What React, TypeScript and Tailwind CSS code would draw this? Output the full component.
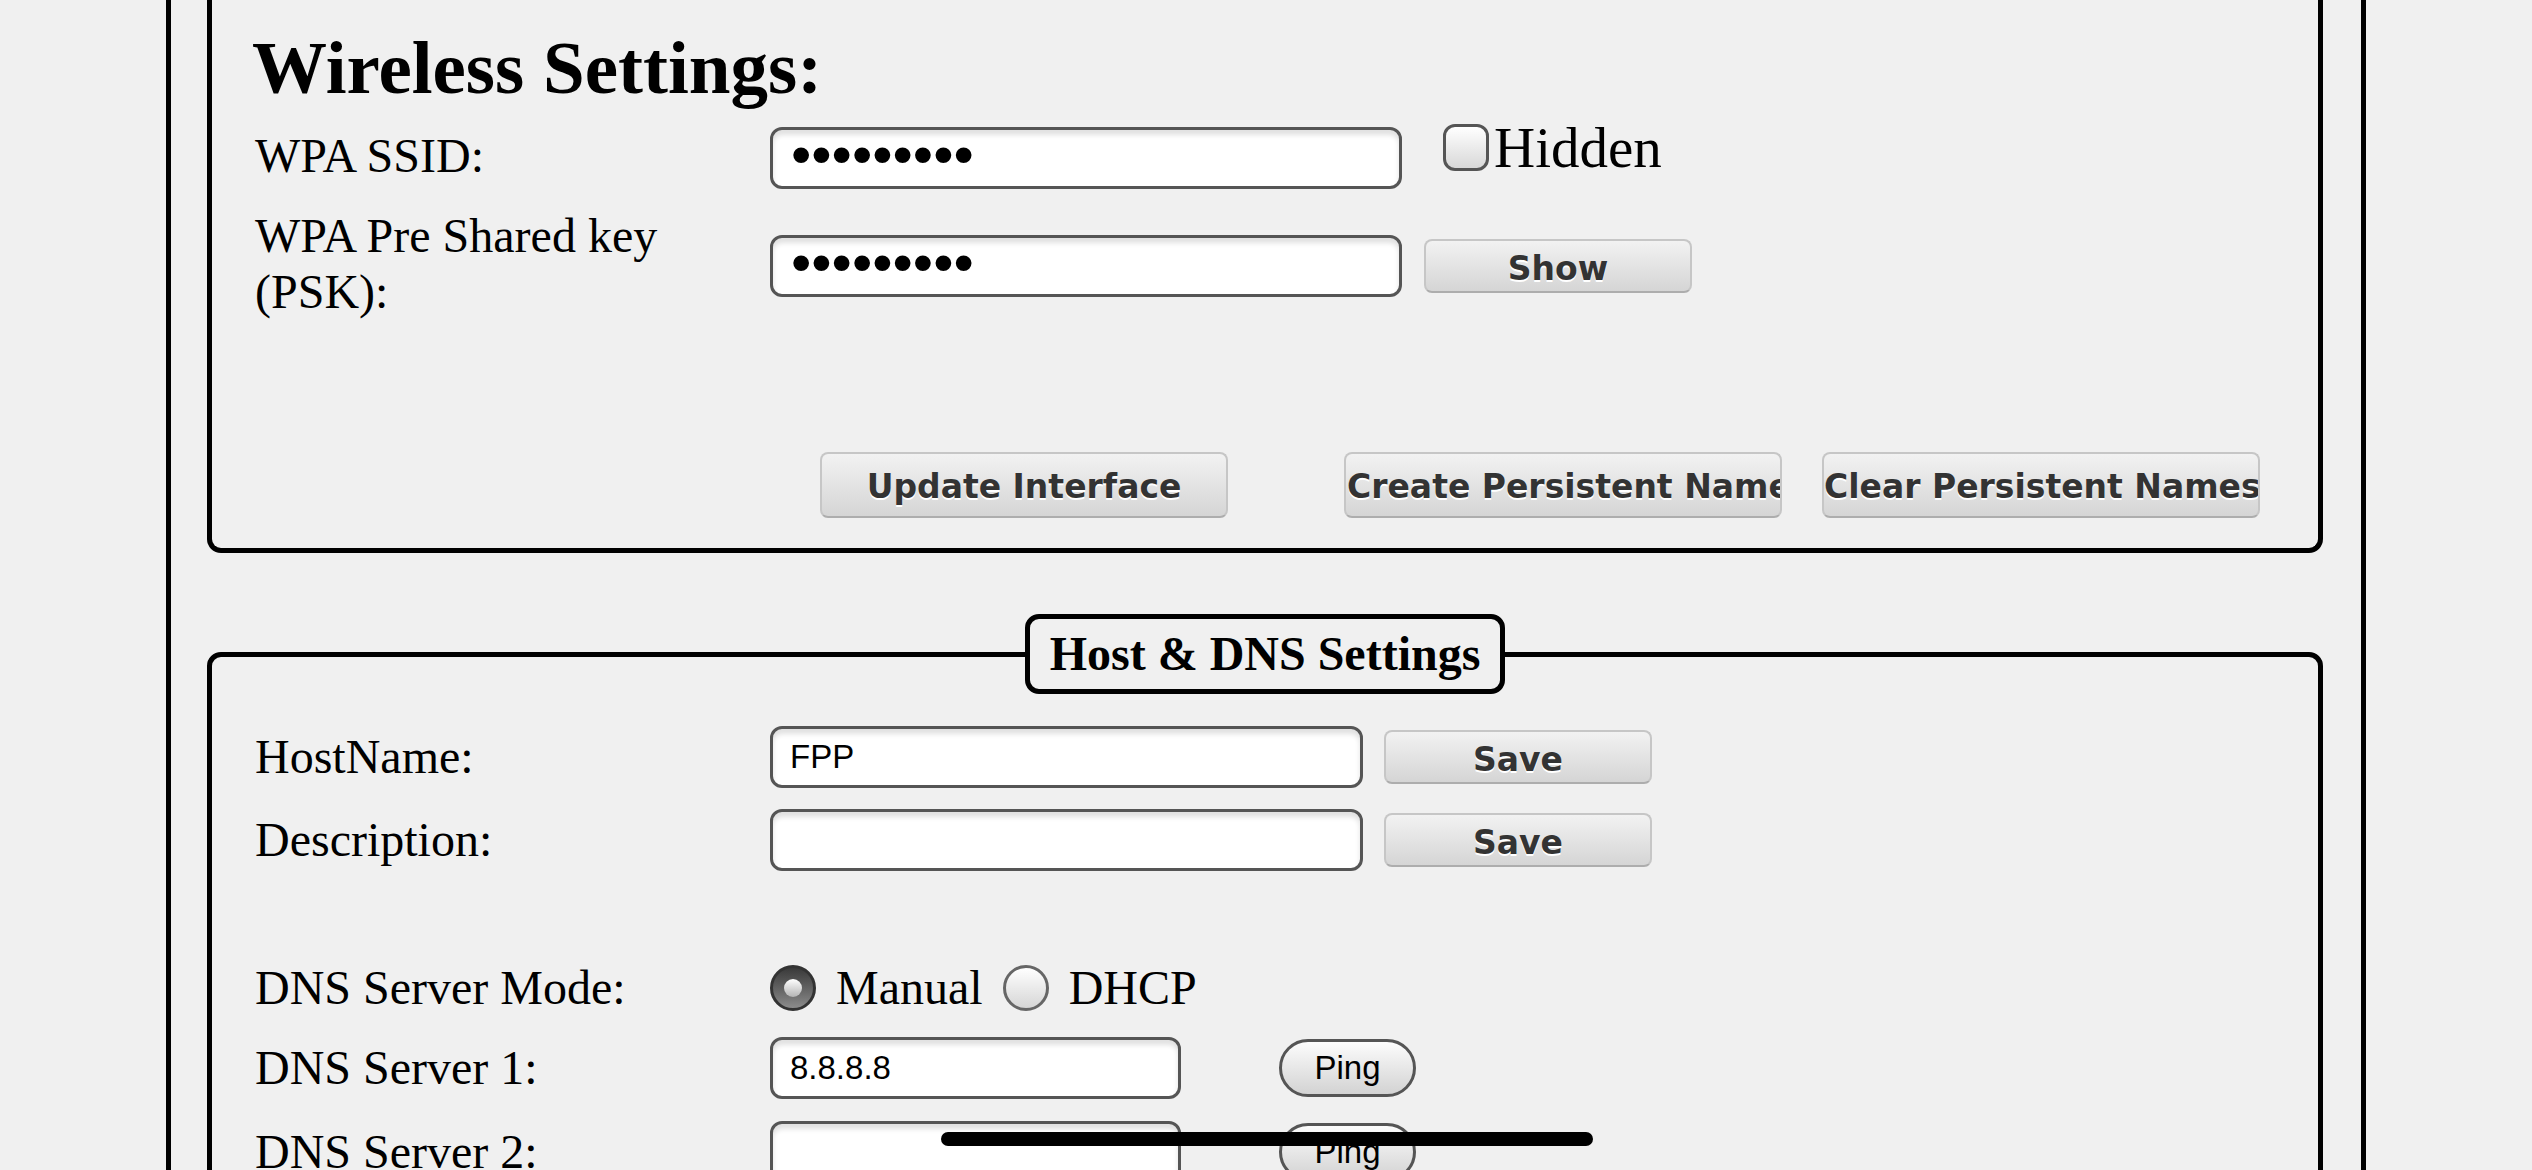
const serif = "font-['Liberation_Serif','Times_New_Roman',serif]";
const sans = "font-['Liberation_Sans',Arial,sans-serif]";

const Label = ({ children, className = "" }: { children: React.ReactNode; className?: string }) => (
  <div className={`w-[515px] shrink-0 ${serif} text-[48px] leading-[56px] text-black ${className}`}>{children}</div>
);

const TextBox = ({ value = "", width }: { value?: string; width: string }) => (
  <input
    readOnly
    defaultValue={value}
    className={`${width} h-[62px] shrink-0 rounded-[12px] border-[3px] border-[#555] bg-white pl-[17px] ${sans} text-[33px] text-black shadow-[inset_0_5px_5px_rgba(0,0,0,0.12)] outline-none`}
  />
);

const Secret = () => (
  <div className="w-[632px] h-[62px] shrink-0 rounded-[12px] border-[3px] border-[#555] bg-white pl-[18px] pb-[10px] flex items-center shadow-[inset_0_5px_5px_rgba(0,0,0,0.12)]">
    <span className={`${sans} text-[58px] leading-[57px] text-black`}>•••••••••</span>
  </div>
);

const GrayButton = ({ children, className = "" }: { children: React.ReactNode; className?: string }) => (
  <button
    className={`shrink-0 rounded-[8px] border-2 border-[#c6c6c6] border-b-[#adadad] bg-linear-to-b from-[#f2f2f2] to-[#d5d5d5] pt-[3px] font-['DejaVu_Sans',Verdana,sans-serif] text-[33px] font-bold text-[#333] [text-shadow:0_2px_0_#fff] whitespace-nowrap overflow-hidden ${className}`}
  >
    {children}
  </button>
);

const Ping = () => (
  <button className={`ml-[98px] w-[137px] h-[58px] shrink-0 rounded-full border-[3px] border-[#555] bg-linear-to-b from-[#fcfcfc] to-[#d3d3d3] ${sans} text-[33px] text-black`}>
    Ping
  </button>
);

const Radio = ({ checked }: { checked?: boolean }) =>
  checked ? (
    <div className="w-[46px] h-[46px] shrink-0 rounded-full border-[3px] border-[#333] bg-linear-to-b from-[#3a3a3a] to-[#8c8c8c] flex items-center justify-center">
      <div className="w-[18px] h-[18px] rounded-full bg-linear-to-b from-white to-[#b5b5b5]"></div>
    </div>
  ) : (
    <div className="w-[46px] h-[46px] shrink-0 rounded-full border-[3px] border-[#666] bg-linear-to-b from-white to-[#d6d6d6]"></div>
  );

export default function App() {
  return (
    <div className="relative w-[2532px] h-[1170px] overflow-hidden bg-[#f0f0f0]">
      <div className="ml-[166px] w-[2200px] h-full border-x-[5px] border-black pl-[36px] flow-root">
        {/*wireless settings*/}
        <div className="w-[2116px] border-x-[5px] border-b-[5px] border-black rounded-b-[14px] pl-[43px] pt-[30px] pb-[30px]">
          <h2 className={`${serif} text-[75px] leading-[75px] font-bold text-black -ml-[3px]`}>Wireless Settings:</h2>

          <div className="mt-[22px] h-[62px] flex items-center">
            <Label className="pb-[4px]">WPA SSID:</Label>
            <Secret />
            <div className="self-start -mt-[3px] ml-[41px] h-[47px] flex items-center">
              <div className="w-[46px] h-[47px] rounded-[12px] border-[3px] border-[#555] bg-linear-to-b from-white to-[#d8d8d8]"></div>
              <span className={`ml-[5px] ${serif} text-[57px] leading-[47px] text-black`}>Hidden</span>
            </div>
          </div>

          <div className="mt-[46px] h-[62px] flex items-center">
            <Label className="pb-[4px]">WPA Pre Shared key (PSK):</Label>
            <Secret />
            <GrayButton className="ml-[22px] w-[268px] h-[54px]">Show</GrayButton>
          </div>

          <div className="mt-[155px] h-[66px] flex">
            <GrayButton className="ml-[565px] w-[408px] h-[66px]">Update Interface</GrayButton>
            <GrayButton className="ml-[116px] w-[438px] h-[66px] text-left pl-[1px]">Create Persistent Names</GrayButton>
            <GrayButton className="ml-[40px] w-[438px] h-[66px]">Clear Persistent Names</GrayButton>
          </div>
        </div>

        {/*host & dns*/}
        <fieldset className="mt-[61px] w-[2116px] border-[5px] border-black rounded-[14px]">
          <legend className="mx-auto w-[480px] h-[80px] border-[5px] border-black rounded-[14px] bg-[#f0f0f0] text-center">
            <span className={`${serif} text-[48px] leading-[70px] font-bold text-black`}>Host &amp; DNS Settings</span>
          </legend>
          <div className="pl-[43px]">
            <div className="mt-[32px] h-[62px] flex items-center">
              <Label>HostName:</Label>
              <TextBox value="FPP" width="w-[593px]" />
              <GrayButton className="ml-[21px] w-[268px] h-[54px]">Save</GrayButton>
            </div>
            <div className="mt-[21px] h-[62px] flex items-center">
              <Label>Description:</Label>
              <TextBox width="w-[593px]" />
              <GrayButton className="ml-[21px] w-[268px] h-[54px]">Save</GrayButton>
            </div>
            <div className="mt-[86px] h-[62px] flex items-center">
              <Label>DNS Server Mode:</Label>
              <Radio checked />
              <span className={`ml-[20px] ${serif} text-[48px] leading-[56px] text-black`}>Manual</span>
              <div className="ml-[20px]">
                <Radio />
              </div>
              <span className={`ml-[20px] ${serif} text-[48px] leading-[56px] text-black`}>DHCP</span>
            </div>
            <div className="mt-[18px] h-[62px] flex items-center">
              <Label>DNS Server 1:</Label>
              <TextBox value="8.8.8.8" width="w-[411px]" />
              <Ping />
            </div>
            <div className="mt-[22px] h-[62px] flex items-center">
              <Label>DNS Server 2:</Label>
              <TextBox width="w-[411px]" />
              <Ping />
            </div>
          </div>
        </fieldset>
      </div>
      <div className="absolute left-[941px] bottom-[24px] w-[652px] h-[14px] rounded-full bg-black"></div>
    </div>
  );
}
